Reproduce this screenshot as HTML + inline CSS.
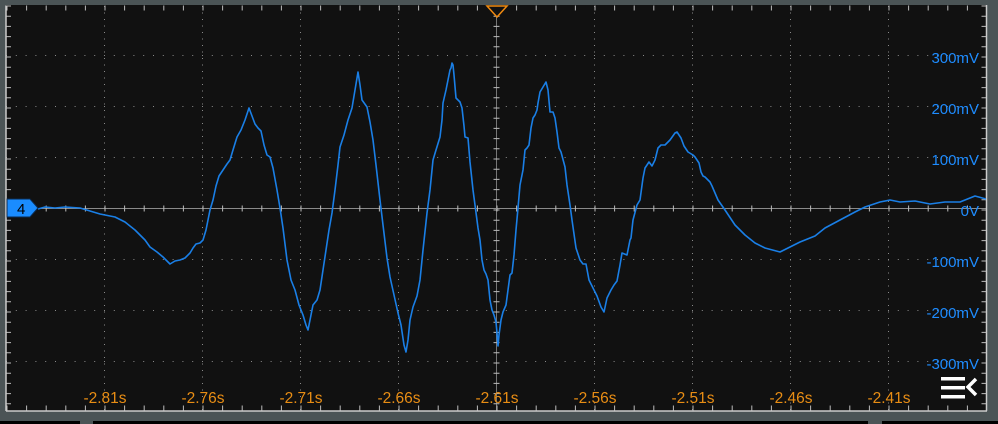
<!DOCTYPE html>
<html><head><meta charset="utf-8"><style>
html,body{margin:0;padding:0;background:#4b5456;width:998px;height:424px;overflow:hidden}
svg{display:block}
text{font-family:"Liberation Sans",sans-serif}
</style></head><body>
<svg width="998" height="424" viewBox="0 0 998 424" xmlns="http://www.w3.org/2000/svg">
<rect x="0" y="0" width="998" height="424" fill="#4b5456"/>
<rect x="6" y="5" width="981" height="406" fill="#111111"/>
<rect x="93" y="421" width="775" height="3" fill="#000"/>
<rect x="882" y="421" width="116" height="3" fill="#000"/>
<rect x="0" y="421" width="80" height="3" fill="#000"/>
<g stroke="#8a8a8a" stroke-width="1" stroke-dasharray="1 5.5" fill="none">
<line x1="104.5" y1="6" x2="104.5" y2="411"/>
<line x1="202.5" y1="6" x2="202.5" y2="411"/>
<line x1="300.5" y1="6" x2="300.5" y2="411"/>
<line x1="398.5" y1="6" x2="398.5" y2="411"/>
<line x1="594.5" y1="6" x2="594.5" y2="411"/>
<line x1="692.5" y1="6" x2="692.5" y2="411"/>
<line x1="790.5" y1="6" x2="790.5" y2="411"/>
<line x1="888.5" y1="6" x2="888.5" y2="411"/>
</g>
<g stroke="#8a8a8a" stroke-width="1" stroke-dasharray="1 8.8" fill="none">
<line x1="6" y1="55.5" x2="986" y2="55.5"/>
<line x1="6" y1="106.5" x2="986" y2="106.5"/>
<line x1="6" y1="157.5" x2="986" y2="157.5"/>
<line x1="6" y1="259.5" x2="986" y2="259.5"/>
<line x1="6" y1="310.5" x2="986" y2="310.5"/>
<line x1="6" y1="361.5" x2="986" y2="361.5"/>
</g>
<line x1="6" y1="208.5" x2="986" y2="208.5" stroke="#8a8a8a" stroke-width="1"/>
<line x1="496.5" y1="6" x2="496.5" y2="411" stroke="#777" stroke-width="1"/>
<g stroke="#bbbbbb" fill="none">
<line x1="6.5" y1="208.5" x2="986" y2="208.5" stroke-width="6" stroke-dasharray="1 18.6"/>
<line x1="496.5" y1="5.5" x2="496.5" y2="411" stroke-width="6" stroke-dasharray="1 9.2"/>
<line x1="8.5" y1="5.5" x2="8.5" y2="411" stroke-width="5" stroke-dasharray="1 9.2"/>
<line x1="984" y1="5.5" x2="984" y2="411" stroke-width="5" stroke-dasharray="1 9.2"/>
<line x1="6.5" y1="408" x2="986" y2="408" stroke-width="5" stroke-dasharray="1 18.6"/>
<line x1="6.5" y1="8" x2="986" y2="8" stroke-width="5" stroke-dasharray="1 18.6"/>
<line x1="6" y1="5.5" x2="6" y2="411" stroke-width="1.5" stroke="#ccc"/>
<line x1="6" y1="411" x2="987" y2="411" stroke-width="1.5" stroke="#ccc"/>
<line x1="986.5" y1="5" x2="986.5" y2="411" stroke-width="1.5" stroke="#ccc"/>
</g>
<path d="M487,6 L507,6 L497,17 Z" fill="#111" stroke="#f08a10" stroke-width="1.5"/>
<polyline fill="none" stroke="#1a7fe6" stroke-width="1.6" stroke-linejoin="round" points="
38,209 45,207 55,208 65,207 80,208 90,211 100,214 115,217 125,222 135,230 145,240 150,247 157,252 163,257 170,264 175,261 180,260 185,258 190,253 193,248 196,244 200,243 203,240 206,230 210,210 213,200 216,186 219,176 223,170 227,164 230,160 233,150 237,137 241,130 245,120 249,108 252,116 255,124 258,128 261,131 264,145 267,155 270,157 273,168 277,190 280,208 283,228 287,260 291,280 295,290 299,305 303,315 306,325 308,330 310,320 313,305 317,300 320,290 323,270 326,250 329,230 332,213 335,190 338,165 340,147 344,135 348,120 352,108 355,90 358,72 360,85 362,100 367,107 370,122 373,140 376,165 380,200 383,225 387,258 390,277 394,295 398,313 401,325 404,345 406,352 408,340 410,320 413,307 417,296 420,280 423,250 427,213 430,190 433,160 436,150 440,137 442,120 443,103 446,90 448,80 450,70 451,68 452,63 453,65 454,75 456,98 460,102 462,108 464,126 465,137 468,138 470,162 473,190 475,205 478,228 480,240 482,260 484,270 486,274 488,280 490,300 492,310 494,315 496,322 497,333 498,346 499,335 501,320 503,312 506,305 508,290 510,275 512,273 514,255 516,230 518,208 520,185 523,170 525,150 527,148 529,145 531,128 533,118 535,115 537,110 538,103 540,92 546,82 548,90 550,112 553,112 555,118 557,132 559,148 561,152 565,167 567,185 570,205 572,220 576,248 580,260 583,264 586,264 589,280 594,290 597,296 601,307 604,312 607,298 611,290 614,285 617,281 620,265 622,253 627,255 630,240 631,238 633,220 637,205 640,200 643,178 645,168 649,162 652,166 655,160 658,148 661,145 665,145 670,140 675,133 677,132 681,138 684,146 688,152 693,155 695,157 699,163 701,172 703,176 705,177 710,182 712,186 718,200 725,210 735,225 745,235 755,243 765,248 780,252 790,247 800,242 815,236 825,228 840,220 855,212 865,207 880,202 890,200 900,202 915,201 930,204 945,202 960,202 975,196 986,199"/>
<path d="M7,199 L30,199 L38,208 L30,217 L7,217 Z" fill="#1a8cff" stroke="#0a2a50" stroke-width="1"/>
<text x="17" y="214" font-size="15" fill="#000">4</text>
<g fill="#1e8cff" font-size="15" text-anchor="end">
<text x="979" y="63">300mV</text>
<text x="979" y="114">200mV</text>
<text x="979" y="165">100mV</text>
<text x="979" y="216">0V</text>
<text x="979" y="267">-100mV</text>
<text x="979" y="318">-200mV</text>
<text x="979" y="369">-300mV</text>
</g>
<g fill="#e88d14" font-size="15.5" text-anchor="middle">
<text x="105" y="403">-2.81s</text>
<text x="203" y="403">-2.76s</text>
<text x="301" y="403">-2.71s</text>
<text x="399" y="403">-2.66s</text>
<text x="497" y="403">-2.61s</text>
<text x="595" y="403">-2.56s</text>
<text x="693" y="403">-2.51s</text>
<text x="791" y="403">-2.46s</text>
<text x="889" y="403">-2.41s</text>
</g>
<g fill="#fff">
<rect x="941" y="377" width="24" height="3.5"/>
<rect x="941" y="386" width="24" height="3.5"/>
<rect x="941" y="395" width="24" height="3.5"/>
</g>
<path d="M976,379 L968,387 L976,395" fill="none" stroke="#fff" stroke-width="3.5"/>
</svg>
</body></html>
